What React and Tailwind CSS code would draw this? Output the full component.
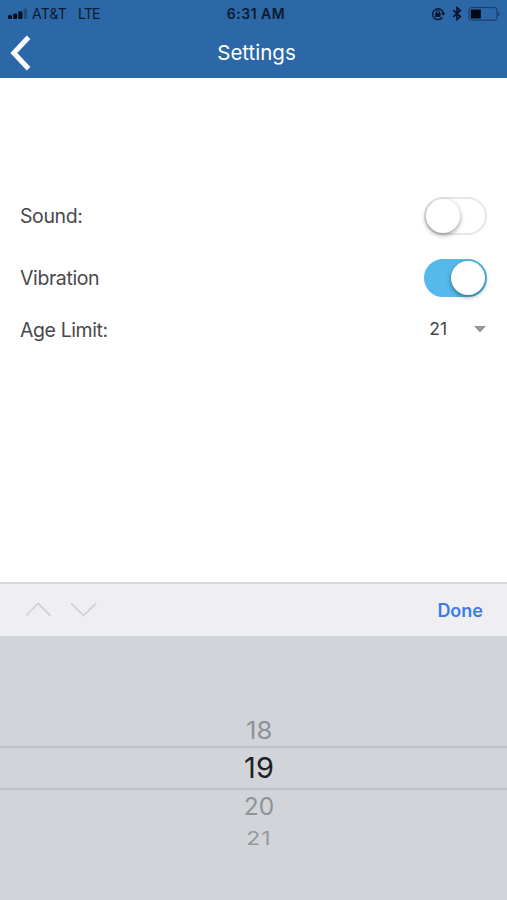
import { useState } from 'react';
import clsx from 'clsx';

const AGES = [
  { value: 18, className: 'h-[33px] pt-px text-[24.5px] text-[#8f9296] scale-x-105' },
  { value: 19, className: 'h-[44px] border-y-2 border-[#bec1c6] text-[29px] text-[#1d2024]' },
  { value: 20, className: 'h-[33px] text-[24.5px] text-[#8f9296]' },
  { value: 21, className: 'h-[33px] text-[23px] text-[#97999d] scale-y-[0.8] tracking-[1px]' },
];

function StatusBar() {
  return (
    <div className="grid h-7 grid-cols-3 items-center text-[#0a1b30]">
      <div className="flex items-center pb-px pl-2 text-[14px]">
        <svg width="20" height="12" viewBox="0 0 20 12" fill="#04101f">
          <rect x="0" y="7.2" width="4" height="3.8" rx="1" />
          <rect x="5.2" y="5.4" width="4" height="5.6" rx="1" />
          <rect x="10.4" y="3.2" width="4" height="7.8" rx="1" />
          <rect x="15.6" y="0.6" width="3.6" height="10.4" rx="1" opacity="0.3" />
        </svg>
        <span className="ml-1 tracking-[0.2px]">AT&amp;T</span>
        <span className="ml-[11px] tracking-[-0.8px]">LTE</span>
      </div>
      <div className="pb-px pl-[5px] text-center text-[14px] font-semibold tracking-[0.5px]">6:31 AM</div>
      <div className="flex items-center justify-end pr-[6px] pb-px">
        <svg width="14" height="14" viewBox="0 0 14 14" fill="none" stroke="#06152a" strokeWidth="1.4">
          <path d="M11.3 10.5A5.4 5.4 0 1 1 12.3 6" />
          <path d="M10 6h4.2l-2 2.8z" fill="#06152a" stroke="none" />
          <rect x="4.2" y="6.1" width="5.4" height="4" rx="0.5" fill="#06152a" stroke="none" />
          <path d="M5.4 6.5V5.3a1.5 1.5 0 0 1 3 0v1.2" strokeWidth="1.1" />
        </svg>
        <svg className="ml-[7px]" width="10" height="15" viewBox="0 0 10 15" fill="none" stroke="#06152a" strokeWidth="1.6">
          <path d="M1.2 4.2l7.2 6.4L5 13.4V1.6l3.4 2.8-7.2 6.4" />
        </svg>
        <svg className="ml-[6px]" width="33" height="14" viewBox="0 0 33 14">
          <rect x="1" y="0.6" width="28" height="12.6" rx="2.6" fill="none" stroke="#18395f" strokeWidth="1" />
          <rect x="2.8" y="2.4" width="10" height="9.2" rx="0.8" fill="#020814" />
          <path d="M30.4 4.8c1.6.6 1.6 3.8 0 4.4z" fill="#18395f" />
        </svg>
      </div>
    </div>
  );
}

function Header() {
  return (
    <header className="h-[78px] shrink-0 bg-[#2c67a8]">
      <StatusBar />
      <div className="grid h-[50px] grid-cols-3 items-center text-white">
        <button className="ml-[10px] w-6" aria-label="Back">
          <svg width="22" height="36" viewBox="0 0 22 36" fill="none" stroke="#fff" strokeWidth="5">
            <path d="M18.6 2.2L3.8 18l14.8 15.8" />
          </svg>
        </button>
        <h1 className="pl-[6px] text-center text-[20.5px]">Settings</h1>
      </div>
    </header>
  );
}

function Toggle({ label, checked, onChange }) {
  return (
    <button
      role="switch"
      aria-label={label}
      aria-checked={checked}
      onClick={() => onChange(!checked)}
      className={clsx(
        'flex h-[38px] w-[63px] items-center rounded-full border-2',
        checked ? 'justify-end border-[#56b9eb] bg-[#56b9eb]' : 'justify-start border-[#e6e6e6] bg-white'
      )}
    >
      <span className="size-[34px] rounded-full bg-white shadow-[0_2px_5px_rgba(0,0,0,0.4)]" />
    </button>
  );
}

function Row({ label, className, children }) {
  return (
    <div className={clsx('flex items-center justify-between px-5', className)}>
      <span className="pt-[2px]">{label}</span>
      {children}
    </div>
  );
}

export default function App() {
  const [sound, setSound] = useState(false);
  const [vibration, setVibration] = useState(true);

  return (
    <div className="flex h-[900px] w-[507px] flex-col overflow-hidden bg-white font-['Inter',sans-serif]">
      <Header />

      <main className="flex-1 pt-[107px] text-[19.5px] tracking-[-0.4px] text-[#48484a]">
        <Row label="Sound:" className="h-[62px]">
          <Toggle label="Sound" checked={sound} onChange={setSound} />
        </Row>
        <Row label="Vibration" className="h-[62px]">
          <Toggle label="Vibration" checked={vibration} onChange={setVibration} />
        </Row>
        <Row label="Age Limit:" className="h-[42px]">
          <div className="flex items-center pr-px pb-[2px] text-[17.5px] tracking-normal">
            <span>21</span>
            <svg className="ml-[27px]" width="12" height="7" viewBox="0 0 12 7" fill="#959595">
              <path d="M0 0h12L6 6.6z" />
            </svg>
          </div>
        </Row>
      </main>

      {/* Keyboard accessory bar */}
      <div className="flex h-[54px] shrink-0 items-center border-t-2 border-[#d9dadc] bg-[#efeff1] pr-6 pl-[25px]">
        <svg className="mb-[2px]" width="27" height="15" viewBox="0 0 27 15" fill="none" stroke="#d0d1d3" strokeWidth="1.8">
          <path d="M1 13.6L13.2 1.4l12.2 12.2" />
        </svg>
        <svg className="mb-[2px] ml-[18px]" width="27" height="15" viewBox="0 0 27 15" fill="none" stroke="#d0d1d3" strokeWidth="1.8">
          <path d="M1 1.4l12.6 12.2L26 1.4" />
        </svg>
        <button className="ml-auto text-[18px] font-semibold text-[#3e7be6]">Done</button>
      </div>

      {/* Age picker */}
      <div className="h-[264px] shrink-0 bg-[#d1d5da] pt-[77px]">
        {AGES.map((age) => (
          <div
            key={age.value}
            className={clsx('flex items-center justify-center pl-[11px]', age.className)}
          >
            {age.value}
          </div>
        ))}
      </div>
    </div>
  );
}
